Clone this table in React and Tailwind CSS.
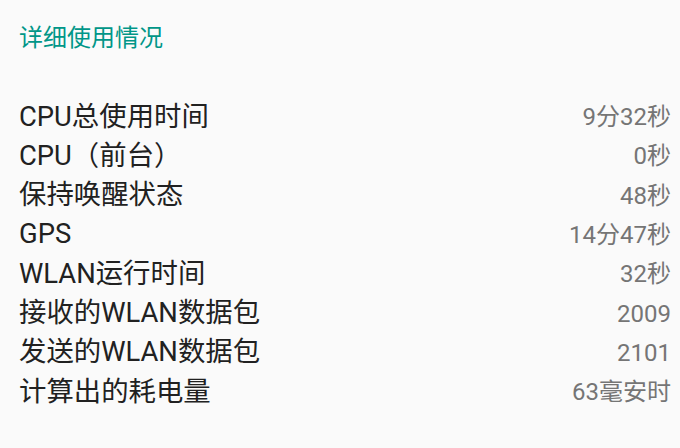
import React from "react";

const rows = [
  ["CPU总使用时间", "9分32秒"],
  ["CPU（前台）", "0秒"],
  ["保持唤醒状态", "48秒"],
  ["GPS", "14分47秒"],
  ["WLAN运行时间", "32秒"],
  ["接收的WLAN数据包", "2009"],
  ["发送的WLAN数据包", "2101"],
  ["计算出的耗电量", "63毫安时"],
];

const App = () => {
  return (
    <div
      className="w-[680px] h-[448px] bg-[#fafafa] overflow-hidden pl-[19px] pr-[9px]"
      style={{ fontFamily: 'Roboto, "Noto Sans CJK SC", sans-serif' }}
    >
      <div className="pt-[22px] leading-[32px] text-[24px] text-[#009688] mb-[43.5px]">
        详细使用情况
      </div>

      <div className="flex flex-col">
        {rows.map(([label, value]) => (
          <div key={label} className="flex items-center justify-between h-[39.3px]">
            <span className="text-[27.4px] text-[#212121]">{label}</span>
            <span className="text-[24px] text-[#757575]">{value}</span>
          </div>
        ))}
      </div>
    </div>
  );
};

export default App;
